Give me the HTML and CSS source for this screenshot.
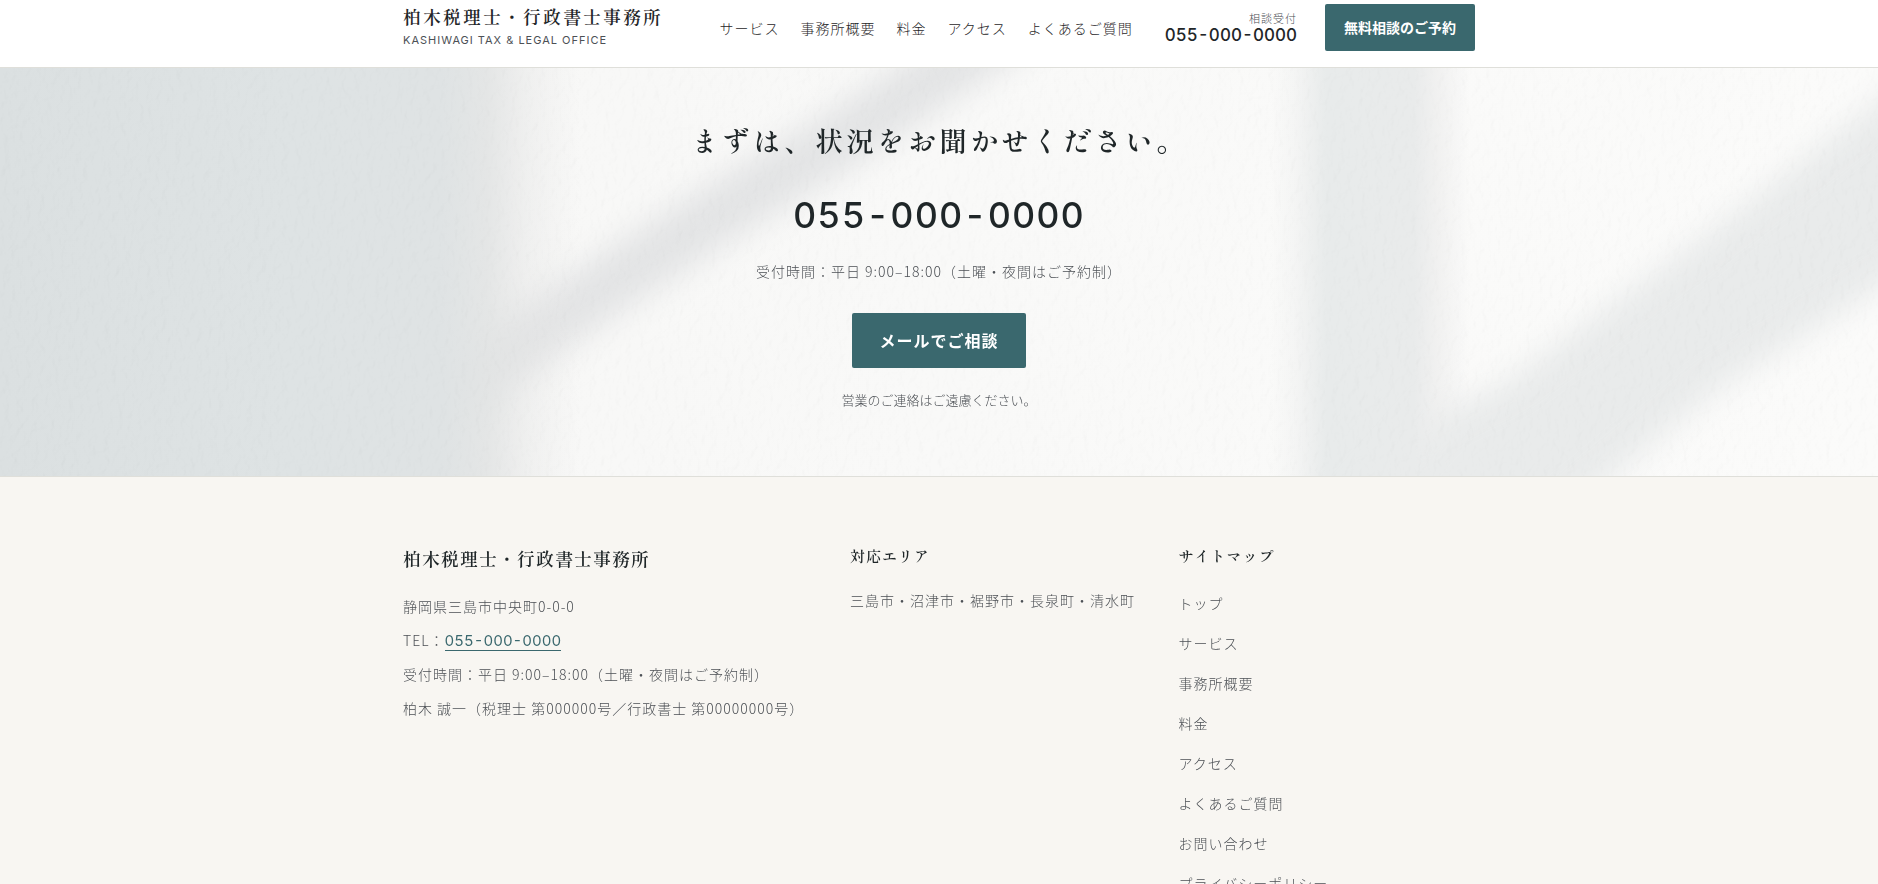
FILE: index.html
```html
<!DOCTYPE html>
<html lang="ja">
<head>
    <meta charset="UTF-8">
    <meta name="viewport" content="width=device-width, initial-scale=1.0">
    <title>柏木税理士・行政書士事務所</title>
    <link rel="stylesheet" href="styles.css">
</head>
<body>
    <header class="site-header">
        <div class="container header-inner">
            <a class="logo" href="#top">
                <span class="logo-name">柏木税理士・行政書士事務所</span>
                <span class="logo-sub">KASHIWAGI TAX &amp; LEGAL OFFICE</span>
            </a>
            <nav class="main-nav">
                <a href="#service">サービス</a>
                <a href="#about">事務所概要</a>
                <a href="#price">料金</a>
                <a href="#access">アクセス</a>
                <a href="#faq">よくあるご質問</a>
            </nav>
            <a class="header-tel" href="tel:0550000000">
                <span class="tel-label">相談受付</span>
                <span class="tel-number">055-000-0000</span>
            </a>
            <a class="btn btn-header" href="#contact">無料相談のご予約</a>
        </div>
    </header>

    <section class="cta" id="contact">
        <!-- plaster wall with window shadows -->
        <svg class="cta-bg" viewBox="0 0 1878 408" preserveAspectRatio="xMidYMid slice" aria-hidden="true">
            <defs>
                <linearGradient id="wall" x1="0" x2="1" y1="0" y2="0">
                    <stop offset="0" stop-color="#f6f6f5"/>
                    <stop offset="0.5" stop-color="#f9f9f8"/>
                    <stop offset="1" stop-color="#fbfbfa"/>
                </linearGradient>
                <linearGradient id="shade" gradientUnits="userSpaceOnUse" x1="0" x2="580" y1="0" y2="0">
                    <stop offset="0" stop-color="#dbe0e1"/>
                    <stop offset="0.5" stop-color="#dee3e4"/>
                    <stop offset="0.76" stop-color="#dfe3e4"/>
                    <stop offset="0.84" stop-color="#e2e4e4" stop-opacity="0.9"/>
                    <stop offset="0.91" stop-color="#e3e4e4" stop-opacity="0.4"/>
                    <stop offset="1" stop-color="#e5e5e5" stop-opacity="0"/>
                </linearGradient>
                <linearGradient id="bar" gradientUnits="userSpaceOnUse" x1="1270" x2="1470" y1="0" y2="0">
                    <stop offset="0" stop-color="#e8eaea" stop-opacity="0"/>
                    <stop offset="0.12" stop-color="#e8eaea" stop-opacity="0.3"/>
                    <stop offset="0.28" stop-color="#e8ebeb"/>
                    <stop offset="0.72" stop-color="#e9ebeb"/>
                    <stop offset="0.84" stop-color="#ebebeb" stop-opacity="0.6"/>
                    <stop offset="1" stop-color="#ebebeb" stop-opacity="0"/>
                </linearGradient>
                <filter id="soft" x="-20%" y="-20%" width="140%" height="140%">
                    <feGaussianBlur stdDeviation="16"/>
                </filter>
                <filter id="grain" x="0" y="0" width="100%" height="100%" color-interpolation-filters="sRGB">
                    <feTurbulence type="fractalNoise" baseFrequency="0.14 0.1" numOctaves="3" seed="8"/>
                    <feDiffuseLighting lighting-color="#ffffff" surfaceScale="2">
                        <feDistantLight azimuth="200" elevation="75"/>
                    </feDiffuseLighting>
                </filter>
            </defs>
            <rect width="1878" height="408" fill="url(#wall)"/>
            <path d="M1040 -60L839 72L719 145L600 222L500 290L360 380" fill="none" stroke="#e3e4e5" stroke-width="58" filter="url(#soft)"/>
            <rect width="580" height="408" fill="url(#shade)"/>
            <rect x="1270" width="200" height="408" fill="url(#bar)"/>
            <path d="M1960 -30L1717 158L1507 314L1440 346L1340 460L1550 460L1717 322L1960 170Z" fill="#e9ebeb" filter="url(#soft)"/>
            <rect class="grain" width="1878" height="408" filter="url(#grain)"/>
        </svg>
        <div class="container cta-inner">
            <h2>まずは、状況をお聞かせください。</h2>
            <a class="cta-tel" href="tel:0550000000">055-000-0000</a>
            <p class="cta-hours">受付時間：平日 9:00–18:00（土曜・夜間はご予約制）</p>
            <a class="btn btn-mail" href="#mail">メールでご相談</a>
            <p class="cta-note">営業のご連絡はご遠慮ください。</p>
        </div>
    </section>

    <footer class="site-footer">
        <div class="container footer-grid">
            <div class="footer-office">
                <h2>柏木税理士・行政書士事務所</h2>
                <p>静岡県三島市中央町0-0-0</p>
                <p>TEL：<a class="footer-tel" href="tel:0550000000">055-000-0000</a></p>
                <p>受付時間：平日 9:00–18:00（土曜・夜間はご予約制）</p>
                <p>柏木 誠一（税理士 第000000号／行政書士 第00000000号）</p>
            </div>
            <div class="footer-area">
                <h3>対応エリア</h3>
                <p>三島市・沼津市・裾野市・長泉町・清水町</p>
            </div>
            <div class="footer-map">
                <h3>サイトマップ</h3>
                <ul>
                    <li><a href="#top">トップ</a></li>
                    <li><a href="#service">サービス</a></li>
                    <li><a href="#about">事務所概要</a></li>
                    <li><a href="#price">料金</a></li>
                    <li><a href="#access">アクセス</a></li>
                    <li><a href="#faq">よくあるご質問</a></li>
                    <li><a href="#contact">お問い合わせ</a></li>
                    <li><a href="#privacy">プライバシーポリシー</a></li>
                </ul>
            </div>
        </div>
    </footer>
</body>
</html>
```
FILE: styles.css
```css
* {
    box-sizing: border-box;
}
html {
    scrollbar-width: none;
}
body {
    margin: 0;
    font-family: "Noto Sans CJK JP", sans-serif;
    font-weight: 300;
    font-size: 14px;
    line-height: 24px;
    letter-spacing: 1px;
    color: #4c5055;
    background-color: #f8f6f2;
}
h2, h3, p, ul {
    margin: 0;
    padding: 0;
}
h2, h3, .logo-name {
    font-family: "Shippori Mincho", "Noto Serif CJK JP", "Noto Sans CJK JP", serif;
    font-weight: 600;
    color: #1f2628;
}
a {
    color: inherit;
    text-decoration: none;
}
.container {
    max-width: 1120px;
    margin: 0 auto;
    padding: 0 24px;
}
.btn {
    display: inline-block;
    background-color: #3a686e;
    color: white;
    font-weight: 700;
    border-radius: 2px;
}
.btn:hover {
    background-color: #2e565b;
}
.tel-number, .cta-tel, .footer-tel {
    font-family: Inter, sans-serif;
    font-weight: 500;
    font-variant-numeric: tabular-nums;
    color: #1f2628;
}

/* header */
.site-header {
    position: sticky;
    top: 0;
    z-index: 10;
    background-color: white;
    border-bottom: 1px solid #dfdfda;
}
.header-inner {
    display: flex;
    align-items: center;
    padding-top: 4px;
    padding-bottom: 16px;
}
.logo {
    display: flex;
    flex-direction: column;
    margin-right: auto;
}
.logo-name {
    font-size: 18px;
    line-height: 25px;
    letter-spacing: 2px;
}
.logo-sub {
    font-family: Inter, sans-serif;
    font-weight: 400;
    font-size: 11px;
    line-height: 22px;
}
.main-nav {
    display: flex;
    gap: 21px;
    color: #1f2628;
    margin-right: 32px;
}
.header-tel {
    display: flex;
    flex-direction: column;
    align-items: flex-end;
    margin-right: 28px;
}
.tel-label {
    font-size: 11px;
    line-height: 14px;
}
.tel-number {
    font-size: 17px;
    line-height: 20px;
    letter-spacing: 0;
}
.btn-header {
    padding: 12px 19px;
    line-height: 23px;
    letter-spacing: 0;
}

/* contact */
.cta {
    position: relative;
    overflow: hidden;
    background-color: #f8f8f6;
    border-bottom: 1px solid #dfdfda;
}
.cta-bg {
    position: absolute;
    top: 0;
    left: 0;
    width: 100%;
    height: 100%;
}
.grain {
    mix-blend-mode: multiply;
    opacity: 0.05;
}
.cta-inner {
    position: relative;
    display: flex;
    flex-direction: column;
    align-items: center;
    padding-top: 48px;
    padding-bottom: 64px;
    text-align: center;
}
.cta h2 {
    font-size: 28px;
    line-height: 48px;
    letter-spacing: 3px;
}
.cta-tel {
    margin-top: 23px;
    font-size: 36px;
    line-height: 56px;
}
.cta-hours {
    margin-top: 16px;
}
.btn-mail {
    margin-top: 30px;
    padding: 14px 27px;
    font-size: 16px;
    line-height: 27px;
}
.cta-note {
    margin-top: 20px;
    font-size: 13px;
    letter-spacing: 0;
}

/* footer */
.footer-grid {
    display: grid;
    grid-template-columns: 1.4fr 1fr 1fr;
    gap: 32px;
    padding-top: 64px;
    padding-bottom: 64px;
}
.footer-office h2 {
    margin-bottom: 14px;
    font-size: 18px;
    line-height: 34px;
}
.footer-office p {
    line-height: 34px;
}
.footer-tel {
    font-weight: 400;
    font-size: 15px;
    line-height: 16px;
    letter-spacing: 0;
    color: #3a686e;
    border-bottom: 1px solid #3a686e;
}
.footer-area h3, .footer-map h3 {
    margin-bottom: 12px;
    font-size: 15px;
    line-height: 30px;
}
.footer-area p {
    line-height: 34px;
}
.footer-map ul {
    list-style: none;
}
.footer-map li {
    line-height: 40px;
}
```
